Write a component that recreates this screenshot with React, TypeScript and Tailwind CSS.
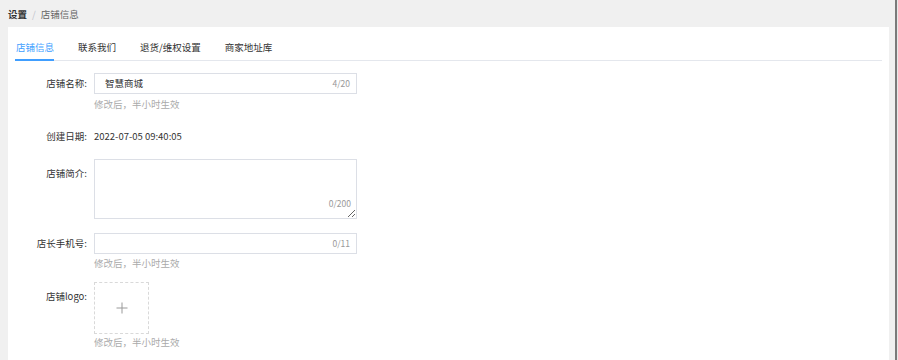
import React from "react";

const font = { fontFamily: '"Noto Sans CJK SC", "Noto Sans", sans-serif' };

function Label({ children, className = "" }: { children: React.ReactNode; className?: string }) {
  return (
    <div className={`w-[79px] shrink-0 pr-[7px] text-right text-[9.5px] text-[#333] ${className}`}>{children}</div>
  );
}

function Hint() {
  return <div className="text-[9.5px] leading-[12px] text-[#aaa]">修改后，半小时生效</div>;
}

export default function App() {
  const tabs = ["店铺信息", "联系我们", "退货/维权设置", "商家地址库"];
  return (
    <div className="flex h-[360px] w-[898px] overflow-hidden bg-[#f0f0f0]" style={font}>
      <div className="flex w-[895px] flex-col pl-[8px] pr-[6px]">
        <div className="flex h-[27px] items-center gap-[5px] text-[9.5px] leading-[12px]">
          <span className="font-bold text-[#333]">设置</span>
          <span className="text-[#c0c4cc]">/</span>
          <span className="text-[#666]">店铺信息</span>
        </div>
        <div className="flex-1 bg-white px-[7px]">
          <div className="flex h-[34px] gap-[24px] border-b border-[#e4e7ed] pl-[1px]">
            {tabs.map((t, i) => (
              <div
                key={t}
                className={`relative flex h-full items-center pt-[7px] text-[9.5px] leading-[12px] ${
                  i === 0 ? "text-[#409eff]" : "text-[#333]"
                }`}
              >
                {t}
                {i === 0 && <div className="absolute bottom-[-1px] left-[-1px] right-0 h-[2px] bg-[#409eff]" />}
              </div>
            ))}
          </div>

          <div className="flex flex-col">
            {/* 店铺名称 */}
            <div className="mt-[12px] flex">
              <Label className="leading-[21px]">店铺名称:</Label>
              <div className="flex flex-col">
                <div className="flex h-[21px] w-[263px] items-center justify-between border border-[#dcdfe6] pl-[10px] pr-[6px]">
                  <span className="text-[9.5px] text-[#333]">智慧商城</span>
                  <span className="text-[8.5px] text-[#999]">4/20</span>
                </div>
                <div className="mt-[4px]">
                  <Hint />
                </div>
              </div>
            </div>

            {/* 创建日期 */}
            <div className="mt-[16px] flex">
              <Label className="leading-[21px]">创建日期:</Label>
              <div className="text-[9.5px] leading-[21px] text-[#333]">2022-07-05 09:40:05</div>
            </div>

            {/* 店铺简介 */}
            <div className="mt-[12px] flex">
              <Label className="pt-[8px] leading-[12px]">店铺简介:</Label>
              <div className="relative h-[60px] w-[263px]">
                <textarea className="block h-[60px] w-[263px] resize-y border border-[#dcdfe6] outline-none" />
                <span className="absolute bottom-[10px] right-[6px] text-[8.5px] leading-[12px] text-[#999]">0/200</span>
              </div>
            </div>

            {/* 店长手机号 */}
            <div className="mt-[14px] flex">
              <Label className="leading-[21px]">店长手机号:</Label>
              <div className="flex flex-col">
                <div className="flex h-[21px] w-[263px] items-center justify-end border border-[#dcdfe6] pr-[6px]">
                  <span className="text-[8.5px] text-[#999]">0/11</span>
                </div>
                <div className="mt-[3px]">
                  <Hint />
                </div>
              </div>
            </div>

            {/* 店铺logo */}
            <div className="mt-[13px] flex">
              <Label className="pt-[8px] leading-[12px]">店铺logo:</Label>
              <div className="flex flex-col">
                <div className="flex h-[52px] w-[55px] items-center justify-center border border-dashed border-[#d9d9d9]">
                  <svg width="12" height="12" viewBox="0 0 12 12">
                    <line x1="6" y1="0.5" x2="6" y2="11.5" stroke="#999" strokeWidth="1" />
                    <line x1="0.5" y1="6" x2="11.5" y2="6" stroke="#999" strokeWidth="1" />
                  </svg>
                </div>
                <div className="mt-[2px]">
                  <Hint />
                </div>
              </div>
            </div>
          </div>
        </div>
      </div>
      <div className="w-[2px] bg-[#7a7a7a]" />
      <div className="w-[1px] bg-[#e8e8e8]" />
    </div>
  );
}
